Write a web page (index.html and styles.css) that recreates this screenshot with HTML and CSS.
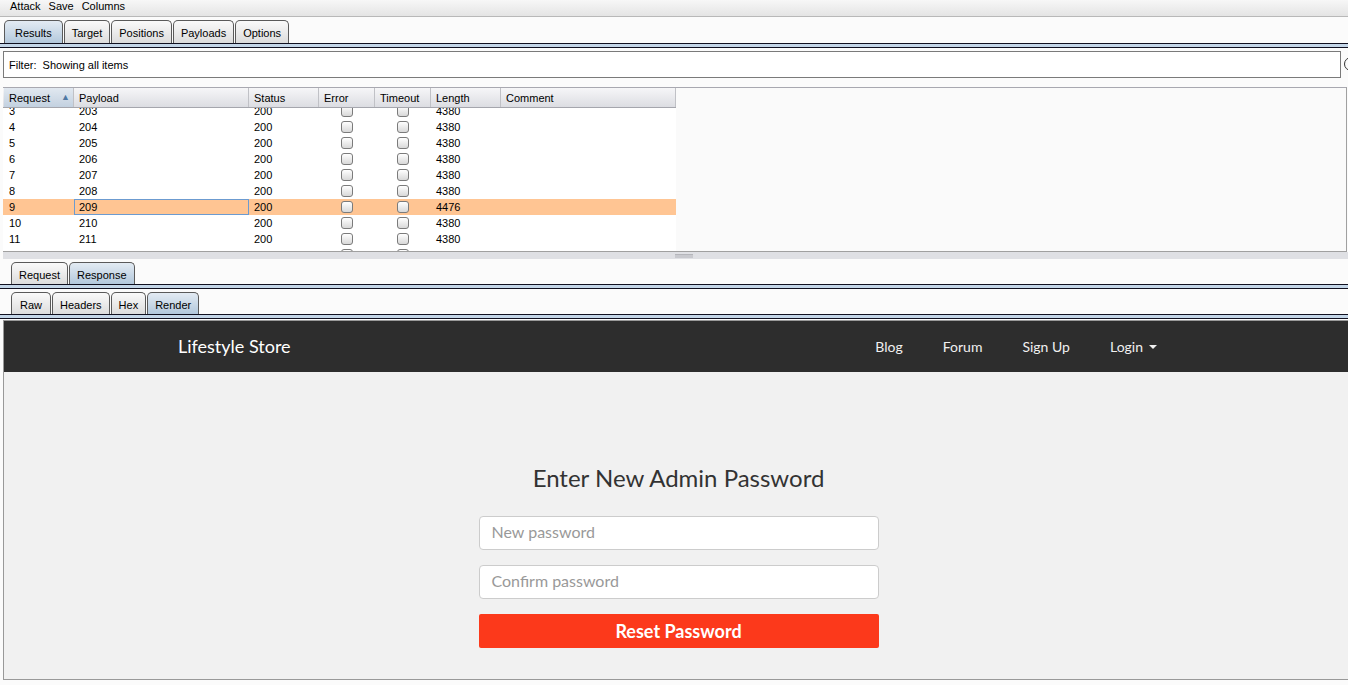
FILE: index.html
```html
<!DOCTYPE html>
<html>
<head>
<meta charset="utf-8">
<link rel="stylesheet" href="styles.css">
</head>
<body>
<div class="app">
  <div class="menubar"><span>Attack</span><span>Save</span><span>Columns</span></div>

  <div class="tabs top-tabs">
    <div class="tab sel">Results</div>
    <div class="tab">Target</div>
    <div class="tab">Positions</div>
    <div class="tab">Payloads</div>
    <div class="tab">Options</div>
  </div>
  <div class="tabline"></div>

  <div class="filter-row">
    <div class="filter">Filter:&nbsp; Showing all items</div>
    <div class="filter-btn"></div>
  </div>

  <div class="results">
    <div class="grid">
      <div class="thead">
        <div class="th c1 active">Request<span class="sort">&#9650;</span></div>
        <div class="th c2">Payload</div>
        <div class="th c3">Status</div>
        <div class="th c4">Error</div>
        <div class="th c5">Timeout</div>
        <div class="th c6">Length</div>
        <div class="th c7">Comment</div>
      </div>
      <div class="tbody">
        <div class="rows">
          <div class="tr"><div class="td c1">3</div><div class="td c2">203</div><div class="td c3">200</div><div class="td c4"><i class="cb"></i></div><div class="td c5"><i class="cb"></i></div><div class="td c6">4380</div><div class="td c7"></div></div>
          <div class="tr"><div class="td c1">4</div><div class="td c2">204</div><div class="td c3">200</div><div class="td c4"><i class="cb"></i></div><div class="td c5"><i class="cb"></i></div><div class="td c6">4380</div><div class="td c7"></div></div>
          <div class="tr"><div class="td c1">5</div><div class="td c2">205</div><div class="td c3">200</div><div class="td c4"><i class="cb"></i></div><div class="td c5"><i class="cb"></i></div><div class="td c6">4380</div><div class="td c7"></div></div>
          <div class="tr"><div class="td c1">6</div><div class="td c2">206</div><div class="td c3">200</div><div class="td c4"><i class="cb"></i></div><div class="td c5"><i class="cb"></i></div><div class="td c6">4380</div><div class="td c7"></div></div>
          <div class="tr"><div class="td c1">7</div><div class="td c2">207</div><div class="td c3">200</div><div class="td c4"><i class="cb"></i></div><div class="td c5"><i class="cb"></i></div><div class="td c6">4380</div><div class="td c7"></div></div>
          <div class="tr"><div class="td c1">8</div><div class="td c2">208</div><div class="td c3">200</div><div class="td c4"><i class="cb"></i></div><div class="td c5"><i class="cb"></i></div><div class="td c6">4380</div><div class="td c7"></div></div>
          <div class="tr hl"><div class="td c1">9</div><div class="td c2 focus">209</div><div class="td c3">200</div><div class="td c4"><i class="cb"></i></div><div class="td c5"><i class="cb"></i></div><div class="td c6">4476</div><div class="td c7"></div></div>
          <div class="tr"><div class="td c1">10</div><div class="td c2">210</div><div class="td c3">200</div><div class="td c4"><i class="cb"></i></div><div class="td c5"><i class="cb"></i></div><div class="td c6">4380</div><div class="td c7"></div></div>
          <div class="tr"><div class="td c1">11</div><div class="td c2">211</div><div class="td c3">200</div><div class="td c4"><i class="cb"></i></div><div class="td c5"><i class="cb"></i></div><div class="td c6">4380</div><div class="td c7"></div></div>
          <div class="tr"><div class="td c1">12</div><div class="td c2">212</div><div class="td c3">200</div><div class="td c4"><i class="cb"></i></div><div class="td c5"><i class="cb"></i></div><div class="td c6">4380</div><div class="td c7"></div></div>
        </div>
      </div>
    </div>
    <div class="empty"></div>
  </div>

  <div class="splitter"><div class="handle"></div></div>

  <div class="tabs sub-tabs">
    <div class="tab">Request</div>
    <div class="tab sel">Response</div>
  </div>
  <div class="tabline"></div>

  <div class="tabs sub-tabs">
    <div class="tab wide">Raw</div>
    <div class="tab">Headers</div>
    <div class="tab">Hex</div>
    <div class="tab sel">Render</div>
  </div>
  <div class="tabline"></div>

  <div class="render">
    <div class="navbar">
      <div class="brand">Lifestyle Store</div>
      <div class="nav">
        <span class="link">Blog</span>
        <span class="link">Forum</span>
        <span class="link">Sign Up</span>
        <span class="link">Login <span class="caret"></span></span>
      </div>
    </div>
    <div class="page">
      <div class="form">
        <h2 class="title">Enter New Admin Password</h2>
        <div class="input">New password</div>
        <div class="input">Confirm password</div>
        <div class="btn">Reset Password</div>
      </div>
    </div>
  </div>
</div>
</body>
</html>
```

FILE: styles.css
```css
* { box-sizing: border-box; }
html, body { margin: 0; padding: 0; }
body {
  width: 1348px;
  height: 685px;
  overflow: hidden;
  background: #fbfbfb;
  font-family: "Liberation Sans", Arial, sans-serif;
  font-size: 11px;
  color: #000;
}
.app { width: 1348px; }

.menubar {
  height: 17px;
  display: flex;
  gap: 8px;
  padding-left: 10px;
  padding-bottom: 4px;
  align-items: center;
  background: linear-gradient(#f7f7f7, #e4e4e4);
  border-bottom: 1px solid #b8b8b8;
  font-size: 11px;
}

.tabs { display: flex; height: 22px; align-items: flex-end; margin-top: 3px; padding-left: 11px; }
.top-tabs { padding-left: 4px; height: 23px; }

.tab {
  height: 100%;
  padding: 2px 7px 0;
  display: flex;
  align-items: center;
  border: 1px solid #5a5a5a;
  border-bottom: none;
  border-radius: 5px 5px 0 0;
  background: linear-gradient(#fafafa, #dcdcdc);
  margin-right: 1px;
  font-size: 11px;
}
.tab.wide { padding: 2px 8px 0; }
.tab.sel { background: linear-gradient(#e3ebf3, #b3c8dc); }
.top-tabs .tab.sel { padding: 2px 10px 0; }

.tabline {
  height: 5px;
  border-top: 1px solid #101020;
  border-bottom: 1px solid #101020;
  background: #c4d6e8;
}

.filter-row { display: flex; margin-top: 3px; padding-left: 3px; }
.filter {
  flex: 0 0 1338px;
  height: 27px;
  border: 1px solid #7a7a7a;
  background: #fff;
  display: flex;
  align-items: center;
  padding-left: 5px;
}
.filter-btn {
  flex: 0 0 14px;
  height: 14px;
  margin: 6px 0 0 3px;
  border: 1px solid #333;
  border-radius: 50%;
}

.results {
  margin-top: 9px;
  margin-left: 3px;
  width: 1344px;
  height: 165px;
  display: flex;
  border-top: 1px solid #a8a8b0;
  border-bottom: 1px solid #a0a0a0;
  border-right: 1px solid #a0a0a0;
  background: #fafafa;
}
.grid { width: 673px; display: flex; flex-direction: column; background: #fff; }
.empty { flex: 1; background: #fafafa; }

.thead {
  height: 20px;
  display: flex;
  background: linear-gradient(#f6f6f8, #dcdde2);
  border-bottom: 1px solid #a5a6ad;
  flex-shrink: 0;
}
.th {
  display: flex;
  align-items: center;
  padding-left: 5px;
  border-right: 1px solid #c0c1c6;
  position: relative;
}
.th.active { background: linear-gradient(#e1e8f0, #c3d1e0); }
.sort { position: absolute; left: 57px; top: 4px; color: #4f78a3; font-size: 9px; }

.c1 { width: 71px; }
.c2 { width: 175px; }
.c3 { width: 70px; }
.c4 { width: 56px; }
.c5 { width: 56px; }
.c6 { width: 70px; }
.c7 { width: 175px; }
.thead .c1 { width: 70px; margin-left: 1px; }

.tbody { flex: 1; overflow: hidden; }
.rows { margin-top: -5px; }
.tr { height: 16px; display: flex; }
.tr.hl { background: #ffc593; }
.td { display: flex; align-items: center; padding-left: 5px; height: 16px; }
.td.c1 { padding-left: 6px; }
.td.focus { border: 1px solid #6c9bd0; padding-left: 4px; }
.td.c4, .td.c5 { justify-content: center; padding-left: 0; }
.cb {
  display: block;
  width: 12px;
  height: 12px;
  border: 1px solid #7b7b7b;
  border-radius: 3px;
  background: linear-gradient(#ffffff, #d8d8d8);
}

.splitter {
  height: 7px;
  margin-left: 3px;
  background: #dfe0e4;
  position: relative;
}
.handle {
  position: absolute;
  left: 672px;
  top: 2px;
  width: 18px;
  height: 4px;
  background: #c8c9ce;
  border-top: 1px solid #b5b6bb;
}

.render {
  margin-left: 3px;
  margin-top: 1px;
  width: 1345px;
  height: 360px;
  border: 1px solid #999;
  border-right: none;
  display: flex;
  flex-direction: column;
  background: #f1f1f1;
  font-family: Lato, "Liberation Sans", sans-serif;
}
.navbar {
  height: 51px;
  flex-shrink: 0;
  background: #2d2d2d;
  display: flex;
  align-items: center;
  padding-left: 174px;
}
.brand { color: #fff; font-size: 18px; padding-bottom: 2px; }
.nav { margin-left: auto; margin-right: 171px; display: flex; }
.link { color: #f0f0f0; font-size: 14px; padding: 0 20px; display: flex; align-items: center; gap: 6px; }
.caret {
  width: 0; height: 0;
  border-left: 4px solid transparent;
  border-right: 4px solid transparent;
  border-top: 4px solid #f0f0f0;
  margin-top: 1px;
}

.page { flex: 1; display: flex; justify-content: center; padding-left: 5px; }
.form { width: 400px; padding-top: 92px; }
.title {
  margin: 0 0 24px;
  text-align: center;
  font-size: 24px;
  font-weight: 400;
  color: #333;
  line-height: 28px;
}
.input {
  height: 34px;
  border: 1px solid #ccc;
  border-radius: 4px;
  background: #fff;
  color: #999;
  font-size: 16px;
  display: flex;
  align-items: center;
  padding-left: 12px;
  padding-bottom: 3px;
  margin-bottom: 15px;
}
.btn {
  height: 34px;
  border-radius: 2px;
  background: #fc391b;
  color: #fff;
  font-weight: 700;
  font-size: 18px;
  display: flex;
  align-items: center;
  justify-content: center;
}
```
